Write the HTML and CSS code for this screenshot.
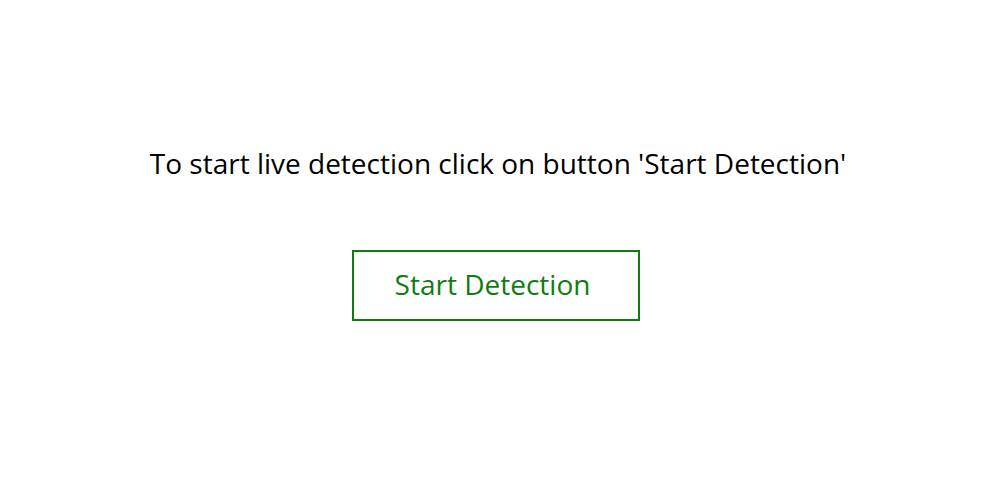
FILE: index.html
```html
<!DOCTYPE html>
<html>
<head>
<meta charset="utf-8">
<link rel="stylesheet" href="styles.css">
</head>
<body>
<main class="page">
  <p class="message">To start live detection click on button 'Start Detection'</p>
  <button class="start-btn">Start Detection</button>
</main>
</body>
</html>
```
FILE: styles.css
```css
html, body {
  margin: 0;
  padding: 0;
  background: #ffffff;
}
.page {
  width: 1000px;
  height: 500px;
  display: flex;
  flex-direction: column;
  align-items: center;
  font-family: "Open Sans", "Noto Sans", sans-serif;
}
.message {
  margin: 144px 4px 0 0;
  font-size: 28px;
  line-height: 38px;
  color: #000000;
  letter-spacing: 0;
}
.start-btn {
  margin: 68px 9px 0 0;
  width: 288px;
  height: 71px;
  border: 2px solid #107c10;
  background: #ffffff;
  color: #107c10;
  font-family: "Open Sans", "Noto Sans", sans-serif;
  font-size: 28px;
  line-height: 38px;
  padding: 0 6px 4px 0;
}
```
